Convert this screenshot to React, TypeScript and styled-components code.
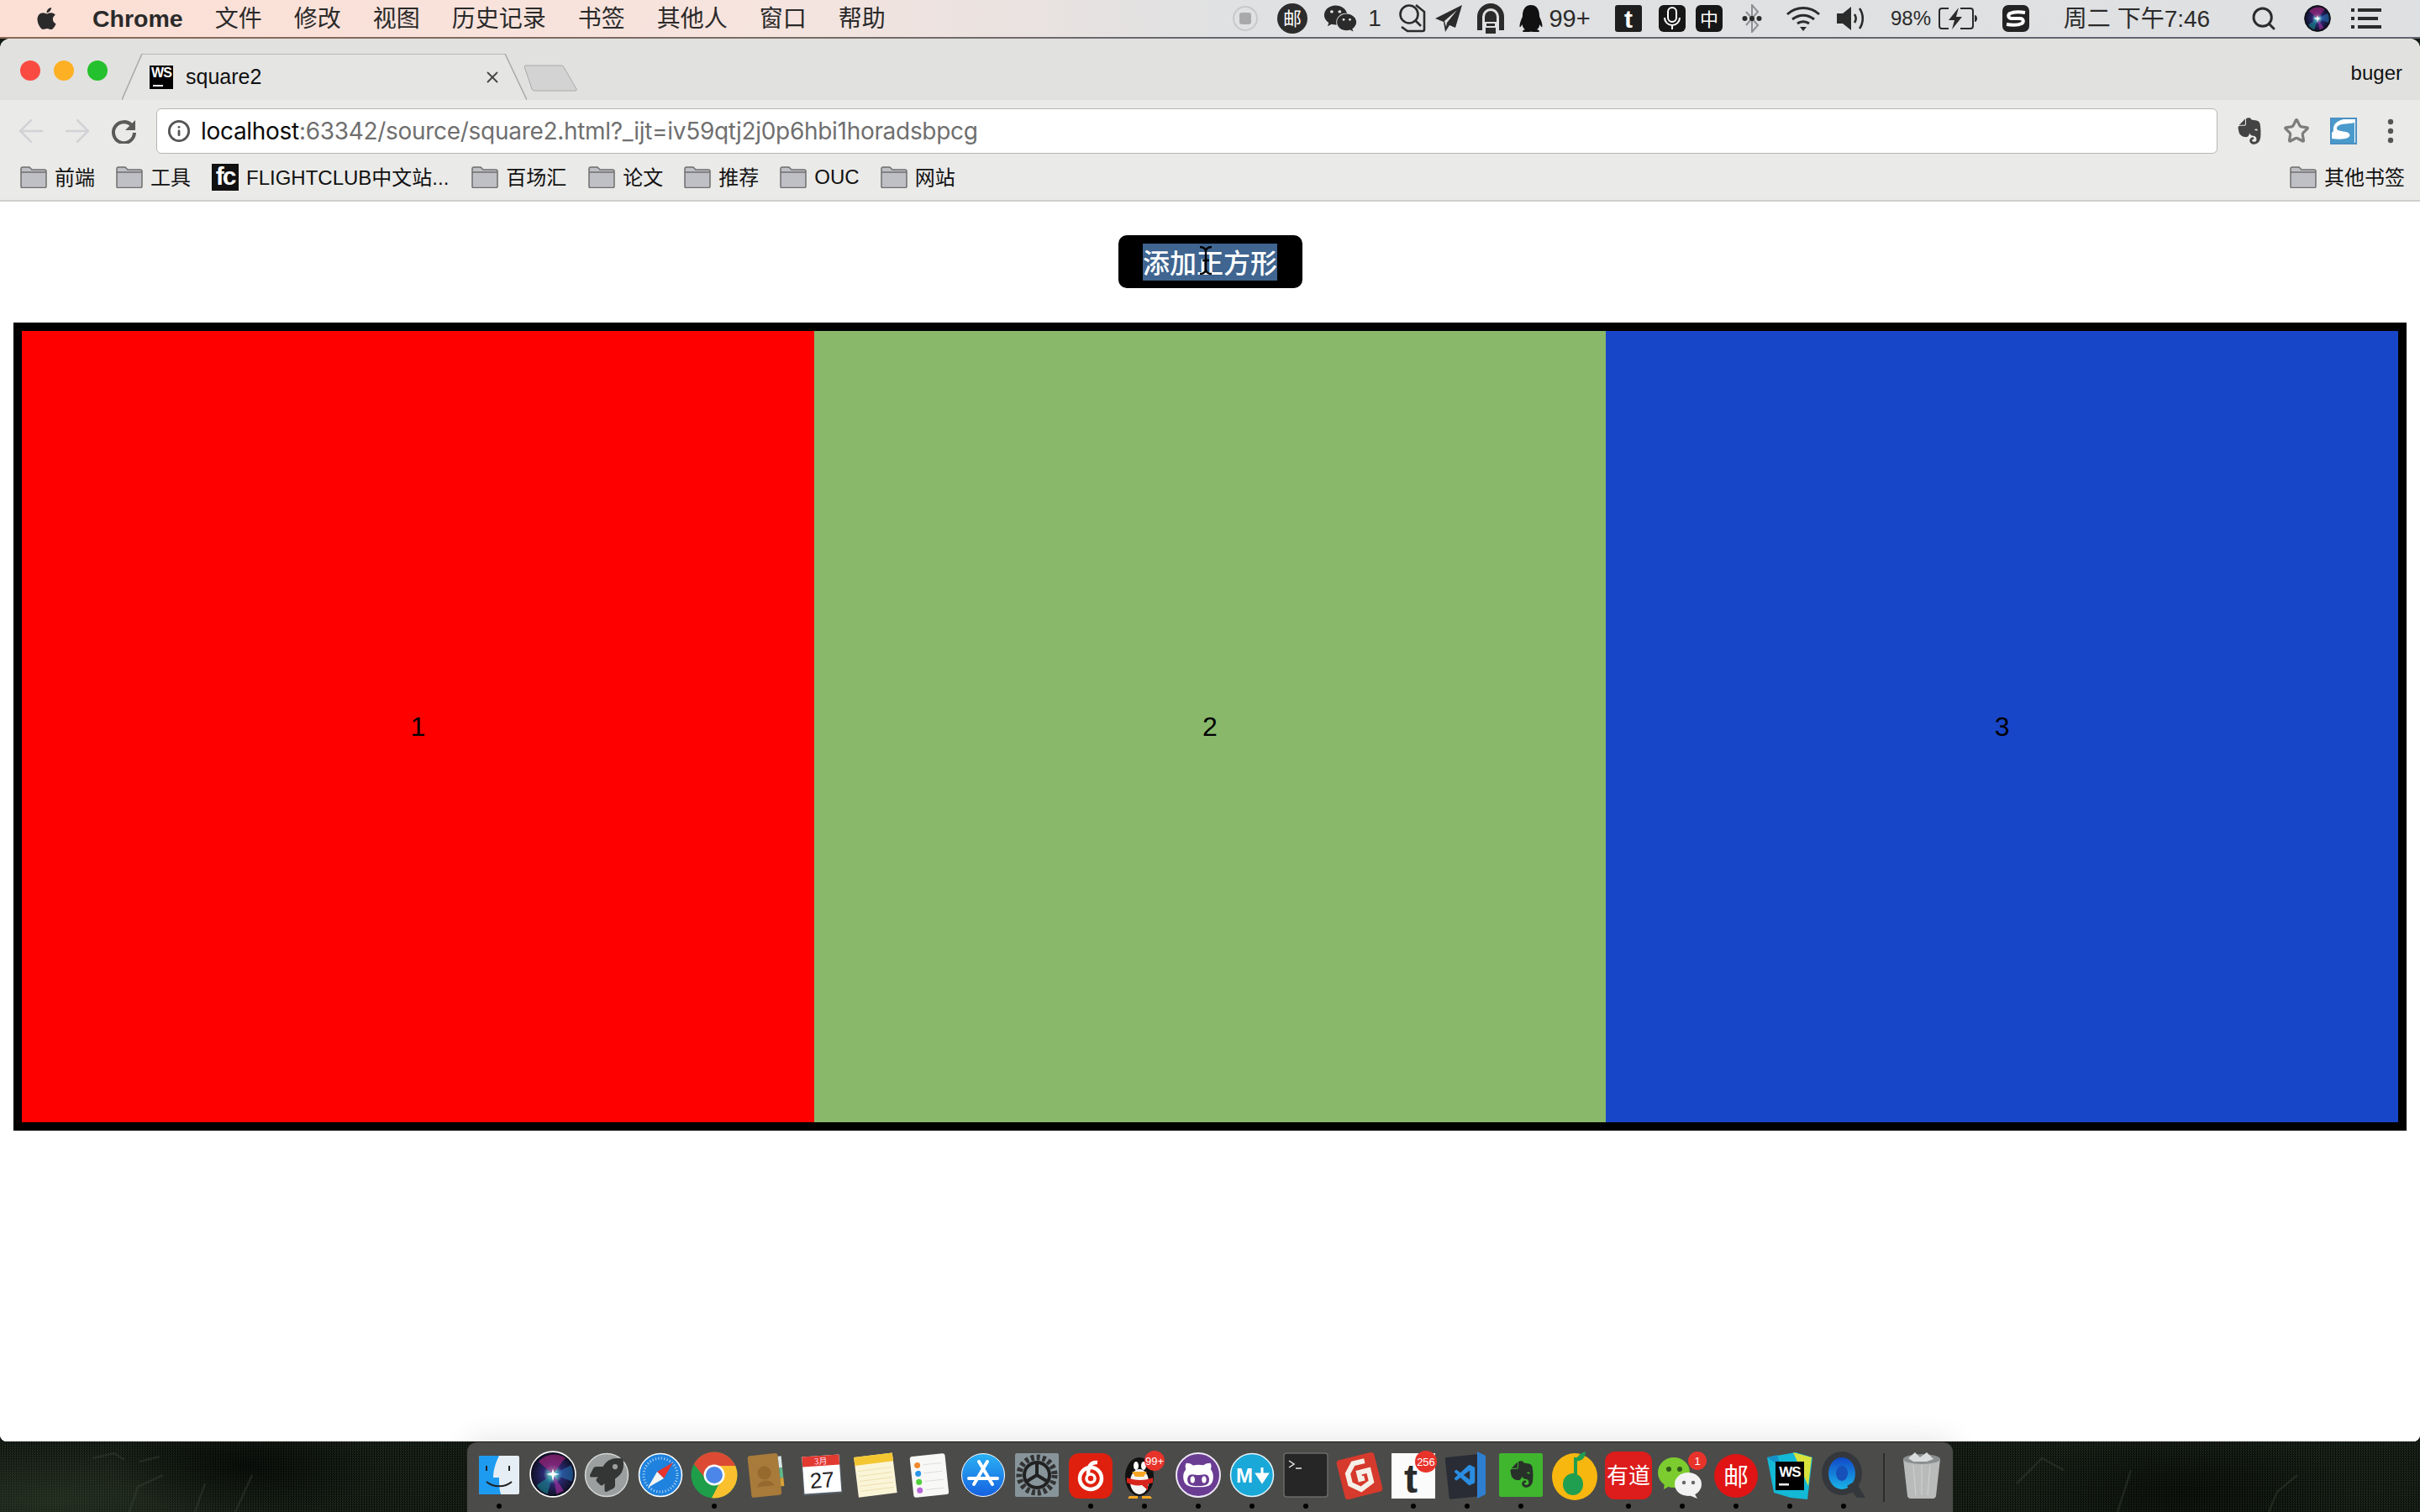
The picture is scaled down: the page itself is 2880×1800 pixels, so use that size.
import React from "react";
import styled, { createGlobalStyle } from "styled-components";
import { FaApple, FaQq, FaWeixin, FaEvernote, FaGithubAlt, FaRocket } from "react-icons/fa";
import { VscVscode } from "react-icons/vsc";
import { Search, Star, ArrowLeft, ArrowRight, Info, X } from "lucide-react";

const UI = `"Liberation Sans", "Noto Sans CJK SC", sans-serif`;

const Global = createGlobalStyle`
  html, body { margin: 0; padding: 0; background: #0c110d; }
  * { box-sizing: border-box; }
`;

const Screen = styled.div`
  width: 2880px; height: 1800px; overflow: hidden; display: flex; flex-direction: column;
  background: #121812; font-family: ${UI}; position: relative;
`;

/* ---------- macOS menu bar ---------- */
const MenuBar = styled.header`
  height: 44px; flex: none; display: flex; align-items: center; padding-left: 42px; color: #2a2a2a;
  background: linear-gradient(90deg, #fcdfd5 0, #f6e4de 900px, #e0e1e2 1450px, #dfe0e2 100%);
  font-size: 28px;
`;
const MenuLeft = styled.nav`display: flex; align-items: center; gap: 38px;`;
const MenuEntry = styled.span`margin-top: -4px;`;
const Apple = styled.span`display: flex; width: 27px; margin-right: 3px; color: #2a2a2a;`;
const AppName = styled.b`font-size: 28.5px; font-weight: 700;`;
const Status = styled.div`margin-left: auto; display: flex; align-items: center; height: 44px; padding-right: 46px;`;
const StatusItem = styled.span<{ $w: number; $ml: number; $fs?: number }>`
  display: flex; align-items: center; justify-content: center; flex: none;
  width: ${(p) => p.$w}px; margin-left: ${(p) => p.$ml}px; color: #2b2b2b; font-size: ${(p) => p.$fs || 26}px; white-space: nowrap;
`;
const Clock = styled(StatusItem)`margin-top: -4px;`;
const Rule = styled.div<{ $c: string }>`height: 2px; flex: none; background: ${(p) => p.$c};`;

/* ---------- browser window ---------- */
const BrowserWindow = styled.main`
  height: 1670px; flex: none; display: flex; flex-direction: column; background: #fff;
  border-radius: 12px 12px 8px 8px; overflow: hidden;
`;
const TabStrip = styled.div`
  height: 73px; flex: none; display: flex; align-items: flex-end; background: #e1e1df; position: relative;
`;
const Lights = styled.div`display: flex; gap: 16px; padding: 0 0 23px 24px; width: 145px; flex: none;`;
const Light = styled.i<{ $c: string }>`width: 24px; height: 24px; border-radius: 50%; background: ${(p) => p.$c};`;
const Tab = styled.div`
  width: 482px; height: 55px; flex: none; position: relative; display: flex; align-items: center; padding: 0 0 0 33px;
  font-size: 25px; color: #111;
`;
const TabShape = styled.svg`position: absolute; inset: 0;`;
const Favicon = styled.span`
  position: relative; width: 28px; height: 28px; background: #000; color: #fff; font-size: 16px; font-weight: 700;
  letter-spacing: -1px; line-height: 17px; text-align: center; flex: none; margin-right: 15px;
  &::after { content: ""; position: absolute; left: 4px; bottom: 3px; width: 12px; height: 2px; background: #fff; }
`;
const TabTitle = styled.span`position: relative; flex: 1;`;
const TabClose = styled.span`position: relative; display: flex; margin-right: 30px; color: #444;`;
const NewTab = styled.svg`flex: none; margin: 0 0 10px -5px;`;
const Account = styled.span`position: absolute; right: 21px; top: 27px; font-size: 24px; color: #111;`;

const Toolbar = styled.div`
  height: 71px; flex: none; display: flex; align-items: flex-start; padding-top: 10px; background: #eaeae8;
`;
const NavButtons = styled.div`display: flex; width: 186px; height: 54px; align-items: center; padding-left: 15px; gap: 11px; flex: none;`;
const NavIcon = styled.span<{ $c: string }>`display: flex; color: ${(p) => p.$c};`;
const ReloadIcon = styled.svg`flex: none; margin-left: 8px;`;
const Omnibox = styled.div`
  width: 2453px; height: 54px; flex: none; display: flex; align-items: center; gap: 12px; padding-left: 12px;
  background: #fff; border: 1px solid #b6b6b6; border-radius: 6px; font: 28px Inter, "Liberation Sans", sans-serif;
  letter-spacing: -0.3px; color: #6f6f6f; white-space: nowrap;
`;
const Host = styled.span`color: #0a0a0a;`;
const Extensions = styled.div`display: flex; height: 54px; align-items: center; flex: none;`;
const Ext = styled.span<{ $w: number; $ml: number; $c?: string }>`
  display: flex; justify-content: center; width: ${(p) => p.$w}px; margin-left: ${(p) => p.$ml}px; color: ${(p) => p.$c || "#444"};
`;

const Bookmarks = styled.div`
  height: 50px; flex: none; display: flex; align-items: flex-start; padding: 5px 18px 0 24px; gap: 25px;
  background: #eaeae8; border-bottom: 2px solid #cfcfcb; font-size: 24px; color: #111;
`;
const Bookmark = styled.span<{ $right?: boolean; $extra?: number }>`
  display: flex; align-items: center; gap: 9px; height: 32px; white-space: nowrap; flex: none;
  margin-right: ${(p) => p.$extra || 0}px;
  ${(p) => (p.$right ? "margin-left: auto;" : "")}
`;
const Label = styled.span<{ $latin?: boolean }>`
  margin-top: ${(p) => (p.$latin ? 0 : -4)}px;
`;
const FcIcon = styled.span`
  width: 32px; height: 32px; background: #111; color: #fff; font-size: 30px; font-weight: 700; line-height: 30px;
  text-align: center; letter-spacing: -2px; font-family: "Liberation Sans", sans-serif;
`;

/* ---------- page content ---------- */
const Page = styled.section`
  flex: 1; display: flex; flex-direction: column; align-items: center; padding: 40px 16px 0; background: #fff;
`;
const AddButton = styled.button`
  width: 219px; height: 63px; flex: none; background: #000; border: 0; border-radius: 10px; padding: 0; color: #fff;
  font: 500 32px "Noto Sans CJK SC", "Liberation Sans", sans-serif; position: relative; display: flex;
  align-items: center; justify-content: center;
`;
const Selected = styled.span`display: block; height: 44px; line-height: 42px; background: #3f6590; width: 160px;`;
const Caret = styled.svg`position: absolute; left: 96px; top: 13px;`;
const Board = styled.div`
  width: 2848px; height: 962px; margin-top: 41px; flex: none; display: grid; grid-template-columns: repeat(3, 1fr);
  border: 10px solid #000;
`;
const Square = styled.div<{ $c: string }>`
  background: ${(p) => p.$c}; display: flex; align-items: center; justify-content: center; font-size: 32px; color: #000;
`;

/* ---------- desktop and dock ---------- */
const Desktop = styled.footer`
  flex: 1; display: flex; justify-content: center; align-items: flex-start; position: relative;
  background:
    radial-gradient(ellipse 160px 60px at 290px 30px, rgba(0, 0, 0, 0.55), transparent),
    radial-gradient(ellipse 200px 70px at 2600px 60px, rgba(0, 0, 0, 0.45), transparent),
    radial-gradient(ellipse 300px 70px at 60px 70px, rgba(50, 66, 44, 0.5), transparent),
    repeating-conic-gradient(#0c100c 0 25%, #1f291e 0 50%) 0 0 / 3px 3px;
`;
const Branches = styled.svg`position: absolute; inset: 0;`;
const Dock = styled.div`
  width: 1768px; height: 84px; flex: none; display: flex; padding-left: 6px; position: relative;
  background: #4b4b49; border-top: 1px solid #1a1a1a; border-radius: 12px 12px 0 0;
  box-shadow: 0 0 36px rgba(0, 0, 0, 0.12);
`;
const Slot = styled.div`width: 64px; height: 84px; flex: none; position: relative; display: flex; justify-content: center; padding-top: 10px;`;
const RunDot = styled.i`position: absolute; left: 29px; top: 73px; width: 6px; height: 6px; border-radius: 50%; background: #000;`;
const DockDivider = styled.i`width: 2px; height: 58px; margin: 13px 12px 0 15px; background: #2c2c2c; flex: none;`;

/* ---------- menu-bar drawings ---------- */
const RecordIcon = () => (
  <svg width="30" height="30" viewBox="0 0 30 30"><circle cx="15" cy="15" r="14" fill="none" stroke="#c8c8cc" strokeWidth="2" /><rect x="8" y="8" width="14" height="14" rx="3" fill="#a9a9ac" /></svg>
);
const MailBadge = () => (
  <svg width="36" height="36" viewBox="0 0 36 36"><circle cx="18" cy="18" r="18" fill="#2c2c2c" /><text x="18" y="26" fontSize="22" fill="#fff" textAnchor="middle" fontFamily="Noto Sans CJK SC">邮</text></svg>
);
const ScanIcon = () => (
  <svg width="34" height="34" viewBox="0 0 34 34" fill="none" stroke="#2b2b2b" strokeWidth="2.6"><path d="M21 1l10 8v21a2 2 0 0 1-2 2H11l-7-5" /><circle cx="13" cy="12" r="10.5" /><path d="M20 19l7 7" /></svg>
);
const PlaneIcon = () => (
  <svg width="32" height="32" viewBox="0 0 32 32" fill="#2b2b2b"><path d="M32 0L0 16l10 4 2 12 5-8 7 3zM11 19L26 6 14 21l-1 5z" fillRule="evenodd" /></svg>
);
const ArchIcon = () => (
  <svg width="32" height="36" viewBox="0 0 32 36" fill="#2b2b2b"><path d="M0 32V16a16 16 0 0 1 32 0v16h-6V16a10 10 0 0 0-20 0v16z" /><path d="M9 22v-6a7 7 0 0 1 14 0v6z" /><rect x="11" y="24" width="10" height="3" /><rect x="10" y="29" width="12" height="7" /></svg>
);
const TileT = () => (
  <svg width="32" height="32" viewBox="0 0 32 32"><rect width="32" height="32" rx="3" fill="#1e1e1e" /><text x="16" y="27" fontSize="30" fontWeight="700" fill="#fff" textAnchor="middle" fontFamily="Liberation Sans">t</text></svg>
);
const MicIcon = () => (
  <svg width="32" height="32" viewBox="0 0 32 32" fill="none"><rect width="32" height="32" rx="6" fill="#161616" /><rect x="11" y="3" width="10" height="17" rx="5" stroke="#fff" strokeWidth="2" /><path d="M7 15a9 9 0 0 0 18 0M16 24v5" stroke="#fff" strokeWidth="2" /></svg>
);
const ZhongIcon = () => (
  <svg width="32" height="32" viewBox="0 0 32 32"><rect width="32" height="32" rx="6" fill="#161616" /><text x="16" y="25" fontSize="22" fill="#fff" textAnchor="middle" fontFamily="Noto Sans CJK SC">中</text></svg>
);
const BluetoothIcon = () => (
  <svg width="24" height="34" viewBox="0 0 24 34" fill="none"><path d="M5 9l14 16-7 8V1l7 8L5 25" stroke="#8e8e96" strokeWidth="2" /><circle cx="3.5" cy="17" r="3" fill="#2b2b2b" /><circle cx="12" cy="17" r="3" fill="#2b2b2b" /><circle cx="20.5" cy="17" r="3" fill="#2b2b2b" /></svg>
);
const WifiIcon = () => (
  <svg width="42" height="30" viewBox="0 0 42 30" fill="none" stroke="#2b2b2b" strokeWidth="3"><path d="M2 10c11-10 27-10 38 0M8 16c8-6.5 18-6.5 26 0M14 21c4-3 10-3 14 0" /><path d="M17 25h8l-4 5z" fill="#2b2b2b" stroke="none" /></svg>
);
const SpeakerIcon = () => (
  <svg width="34" height="30" viewBox="0 0 34 30" fill="none"><path d="M0 9h7l10-8v28L7 21H0z" fill="#2b2b2b" /><path d="M21 10c2 3 2 7 0 10M27 3c5 7 5 17 0 24" stroke="#2b2b2b" strokeWidth="2.6" /></svg>
);
const BatteryIcon = () => (
  <svg width="46" height="26" viewBox="0 0 46 26" fill="none"><path d="M12 1H4a3 3 0 0 0-3 3v18a3 3 0 0 0 3 3h8M26 1h12a3 3 0 0 1 3 3v18a3 3 0 0 1-3 3H26" stroke="#2b2b2b" strokeWidth="2" /><path d="M24 0L12 15h7l-3 11 12-15h-7z" fill="#2b2b2b" /><path d="M43 9c2 0 3 2 3 4s-1 4-3 4z" fill="#2b2b2b" /></svg>
);
const SogouIcon = () => (
  <svg width="32" height="32" viewBox="0 0 32 32" fill="none"><rect width="32" height="32" rx="7" fill="#222" /><path d="M27 9c-6-1-14-1-18 1-3 2-2 6 2 6h10c4 0 5 4 2 6-4 2-12 2-18 1" stroke="#fff" strokeWidth="4" /></svg>
);
const SiriGlyph = ({ size }: { size: number }) => (
  <svg width={size} height={size} viewBox="0 0 52 52">
    <defs>
      <radialGradient id={`siri${size}`} cx="50%" cy="50%" r="55%">
        <stop offset="0" stopColor="#d8ffff" /><stop offset="0.14" stopColor="#6fc8cc" /><stop offset="0.42" stopColor="#2a2870" /><stop offset="1" stopColor="#0c0e1e" />
      </radialGradient>
    </defs>
    <circle cx="26" cy="26" r="25" fill="#0f1020" stroke={size > 40 ? "#fff" : "#111"} strokeWidth="1.5" />
    <circle cx="26" cy="26" r="23" fill={`url(#siri${size})`} />
    <path d="M26 26L10 12A23 23 0 0 1 40 8z" fill="#b0257f" opacity=".6" />
    <path d="M26 26L46 16A23 23 0 0 1 47 34z" fill="#2580c8" opacity=".5" />
    <path d="M26 26L8 38A23 23 0 0 0 20 48z" fill="#18a0a0" opacity=".5" />
    <path d="M26 26L38 44l-8 4z" fill="#b030a8" opacity=".6" />
    <path d="M26 20l1.500 4.500 6 1.500-6 1.500-1.500 6-1.500-6-6-1.500 6-1.500z" fill="#fff" />
  </svg>
);
const ListIcon = () => (
  <svg width="36" height="28" viewBox="0 0 36 28" fill="#2b2b2b"><rect y="2" width="4" height="4" /><rect x="8" y="2" width="28" height="4" /><rect y="12" width="4" height="4" /><rect x="8" y="12" width="24" height="4" /><rect y="22" width="4" height="4" /><rect x="8" y="22" width="28" height="4" /></svg>
);

/* ---------- browser drawings ---------- */
const FolderIcon = () => (
  <svg width="32" height="26" viewBox="0 0 32 26">
    <path d="M1 24V3a2 2 0 0 1 2-2h8l3 3h15a2 2 0 0 1 2 2v18a1.5 1.5 0 0 1-1.500 1.500h-27A1.5 1.5 0 0 1 1 24z" fill="#bfbfc6" stroke="#6e6e6e" strokeWidth="1.5" />
    <path d="M1 7h30" stroke="#6e6e6e" strokeWidth="1.5" />
  </svg>
);
const SogouExt = () => (
  <svg width="32" height="32" viewBox="0 0 32 32"><rect x="1" y="1" width="30" height="30" fill="#fff" stroke="#4a90c4" strokeWidth="2" /><path d="M29 6c-7 2-19 0-21 6-1 4 6 4 11 5 5 1 6 5 2 7-4 2-11 2-19 1l-1 5h28V6z" fill="#4a9acb" /><path d="M2 2h14C8 4 3 8 4 16L2 18z" fill="#4a9acb" /></svg>
);
const DotsIcon = () => (
  <svg width="8" height="30" viewBox="0 0 8 30" fill="#555"><circle cx="4" cy="4" r="3.2" /><circle cx="4" cy="15" r="3.2" /><circle cx="4" cy="26" r="3.2" /></svg>
);

/* ---------- dock drawings ---------- */
const Dk = ({ children }: { children: React.ReactNode }) => (
  <svg width="60" height="60" viewBox="0 0 60 60">{children}</svg>
);
const Finder = () => (
  <Dk>
    <rect x="6" y="6" width="48" height="46" rx="2" fill="#e6eef5" />
    <path d="M8 6h22c-4 8-7 17-7 26h7c0 7 0 14 2 20H8a2 2 0 0 1-2-2V8a2 2 0 0 1 2-2z" fill="#1d9bf0" />
    <path d="M15 18v6M42 18v6" stroke="#222" strokeWidth="2" />
    <path d="M15 37c8 7 22 7 30 0" fill="none" stroke="#222" strokeWidth="2" />
  </Dk>
);
const Launchpad = () => (
  <Dk>
    <circle cx="30" cy="29" r="25.5" fill="#9b9f9f" stroke="#d4d6d4" strokeWidth="1.5" />
    <foreignObject x="10" y="9" width="40" height="40"><FaRocket size={40} color="#343635" /></foreignObject>
  </Dk>
);
const Safari = () => (
  <Dk>
    <circle cx="30" cy="29" r="25.5" fill="#1f82de" stroke="#fff" strokeWidth="1.5" />
    <circle cx="30" cy="29" r="20" fill="none" stroke="#bcdcf5" strokeWidth="3" strokeDasharray="1 2.5" />
    <path d="M45 14L26 25l8 8z" fill="#e8342c" />
    <path d="M15 44l19-11-8-8z" fill="#f4f4f4" />
  </Dk>
);
const Chrome = () => (
  <Dk>
    <clipPath id="chromeClip"><circle cx="30" cy="29" r="27.5" /></clipPath>
    <g clipPath="url(#chromeClip)">
      <rect width="60" height="60" fill="#1f9e4a" />
      <path d="M30 18H62V-4H-4V4L5 15 21 35z" fill="#dd4a34" />
      <path d="M30 18H62V62H24L38 35z" fill="#fbc02d" />
    </g>
    <circle cx="30" cy="29" r="12.5" fill="#fff" />
    <circle cx="30" cy="29" r="10" fill="#4b86e8" />
  </Dk>
);
const Contacts = () => (
  <Dk>
    <g transform="rotate(-6 30 30)">
      <rect x="8" y="4" width="36" height="50" rx="3" fill="#a87b3b" />
      <rect x="44" y="8" width="4" height="14" fill="#d8e6e6" /><rect x="44" y="22" width="4" height="12" fill="#5fb88a" /><rect x="44" y="34" width="4" height="10" fill="#d8a23a" />
      <circle cx="26" cy="26" r="8" fill="#96692e" /><path d="M16 42c2-9 18-9 20 0z" fill="#96692e" />
    </g>
  </Dk>
);
const Calendar = () => (
  <Dk>
    <g transform="rotate(-4 30 30)">
      <rect x="7" y="6" width="46" height="46" fill="#57616b" />
      <rect x="8" y="6" width="44" height="44" fill="#fff" />
      <rect x="8" y="6" width="44" height="12" fill="#e23a30" />
      <text x="30" y="16" fontSize="10" fill="#fde" textAnchor="middle" fontFamily="Noto Sans CJK SC">3月</text>
      <text x="30" y="44" fontSize="26" fill="#222" textAnchor="middle" fontFamily="Liberation Sans">27</text>
    </g>
  </Dk>
);
const Notes = () => (
  <Dk>
    <g transform="rotate(-7 30 30)">
      <rect x="7" y="5" width="46" height="48" fill="#fbf5d8" />
      <rect x="7" y="5" width="46" height="10" fill="#f4c732" />
      <path d="M10 22h40M10 28h40M10 34h40M10 40h40M10 46h40" stroke="#ecdfae" strokeWidth="1" />
    </g>
  </Dk>
);
const Reminders = () => (
  <Dk>
    <g transform="rotate(-6 30 30)">
      <rect x="9" y="5" width="42" height="49" rx="3" fill="#f8f8f6" />
      <circle cx="17" cy="16" r="3.5" fill="#f0892c" /><circle cx="17" cy="26" r="3.5" fill="#2b96e8" /><circle cx="17" cy="36" r="3.5" fill="#4fcf3c" /><circle cx="17" cy="46" r="3.5" fill="#b865d8" />
      <path d="M24 16h22M24 26h22M24 36h22M24 46h22" stroke="#ddd" />
    </g>
  </Dk>
);
const AppStore = () => (
  <Dk>
    <defs><linearGradient id="appS" x1="0" y1="0" x2="0" y2="1"><stop offset="0" stopColor="#2ab2f5" /><stop offset="1" stopColor="#1560e0" /></linearGradient></defs>
    <circle cx="30" cy="29" r="25.5" fill="url(#appS)" stroke="#fff" strokeWidth="1" />
    <path d="M25 13l16 27M35 13L19 40M13 33h34" stroke="#fff" strokeWidth="4" strokeLinecap="round" />
  </Dk>
);
const SysPrefs = () => (
  <Dk>
    <rect x="4" y="3" width="52" height="52" rx="2" fill="#87959b" />
    <circle cx="30" cy="29" r="21" fill="none" stroke="#333" strokeWidth="7" strokeDasharray="4 3" />
    <circle cx="30" cy="29" r="15" fill="none" stroke="#222" strokeWidth="4" />
    <path d="M30 29V14M30 29L17 37M30 29l13 8" stroke="#222" strokeWidth="4" />
  </Dk>
);
const Netease = () => (
  <Dk>
    <rect x="4" y="3" width="52" height="54" rx="12" fill="#e0200f" />
    <circle cx="30" cy="33" r="13" fill="none" stroke="#fff" strokeWidth="4.5" />
    <circle cx="30" cy="33" r="5" fill="none" stroke="#fff" strokeWidth="3.5" />
    <path d="M27 28c0-8 2-15 11-14" fill="none" stroke="#fff" strokeWidth="4.5" />
  </Dk>
);
const Penguin = () => (
  <Dk>
    <ellipse cx="24" cy="31" rx="17" ry="23" fill="#111" />
    <ellipse cx="24" cy="37" rx="11" ry="15" fill="#f4f4f4" />
    <ellipse cx="20" cy="18" rx="3" ry="5" fill="#fff" /><ellipse cx="29" cy="18" rx="3" ry="5" fill="#fff" />
    <path d="M15 25h18l-4 6H19z" fill="#f6a623" />
    <path d="M9 32c10 4 22 4 31 0v6l-6 2v7l-7-6c-6 1-12 0-18-3z" fill="#d8231c" />
    <path d="M12 54h10v3H10zM27 54h10l2 3H27z" fill="#f6a623" />
    <circle cx="42" cy="12" r="12" fill="#e8332b" />
    <text x="42" y="17" fontSize="13" fill="#fff" textAnchor="middle" fontFamily="Liberation Sans">99+</text>
  </Dk>
);
const Github = () => (
  <Dk>
    <circle cx="30" cy="29" r="26" fill="#6a3d93" stroke="#efe8f6" strokeWidth="2" />
    <foreignObject x="11" y="10" width="38" height="38"><FaGithubAlt size={38} color="#fff" /></foreignObject>
  </Dk>
);
const Markdown = () => (
  <Dk>
    <circle cx="30" cy="29" r="25.5" fill="#1aa8d8" stroke="#e6f6fb" strokeWidth="1.5" />
    <text x="21" y="38" fontSize="24" fontWeight="700" fill="#fff" textAnchor="middle" fontFamily="Liberation Sans">M</text>
    <path d="M42 20v12M36 28l6 9 6-9z" stroke="#fff" strokeWidth="3" fill="#fff" />
  </Dk>
);
const Terminal = () => (
  <Dk>
    <rect x="4" y="3" width="52" height="52" rx="3" fill="#262626" stroke="#6b6b6b" strokeWidth="1.5" />
    <path d="M10 12l6 4-6 4" fill="none" stroke="#e8e8e8" strokeWidth="1.5" /><path d="M18 21h7" stroke="#e8e8e8" strokeWidth="1.5" />
  </Dk>
);
const Foxit = () => (
  <Dk>
    <g transform="rotate(-14 30 30)">
      <rect x="7" y="6" width="46" height="48" rx="4" fill="#d63a2c" />
      <path d="M40 14H26l-9 10v13l11 9 14-6V26H30v8h5" fill="none" stroke="#f5f0e8" strokeWidth="6" />
    </g>
  </Dk>
);
const TileDock = () => (
  <Dk>
    <rect x="4" y="3" width="52" height="54" fill="#fbfbfb" />
    <text x="27" y="50" fontSize="48" fontWeight="700" fill="#2a2a2a" textAnchor="middle" fontFamily="Liberation Sans">t</text>
    <circle cx="45" cy="13" r="13" fill="#e8332b" />
    <text x="45" y="18" fontSize="13" fill="#fff" textAnchor="middle" fontFamily="Liberation Sans">256</text>
  </Dk>
);
const VsCode = () => (
  <Dk>
    <rect x="6" y="6" width="40" height="50" rx="2" fill="#2a2c35" transform="rotate(-6 26 30)" />
    <path d="M52 6v46l-10 5V1z" fill="#2e7fd0" />
    <foreignObject x="13" y="15" width="30" height="30"><VscVscode size={30} color="#2a8de0" /></foreignObject>
  </Dk>
);
const Evernote = () => (
  <Dk>
    <rect x="4" y="3" width="52" height="52" rx="2" fill="#3fb62e" />
    <foreignObject x="13" y="10" width="36" height="40"><FaEvernote size={36} color="#28302a" /></foreignObject>
  </Dk>
);
const QQMusic = () => (
  <Dk>
    <ellipse cx="30" cy="31" rx="27" ry="28" fill="#f8b70f" />
    <path d="M31 8v32" stroke="#1f9f4f" strokeWidth="4" />
    <ellipse cx="28" cy="40" rx="12" ry="13" fill="#1f9f4f" />
    <path d="M31 12c2-6 6-9 12-11 0 7-4 12-12 11z" fill="#1f9f4f" />
  </Dk>
);
const Youdao = () => (
  <Dk>
    <rect x="2" y="1" width="56" height="57" rx="12" fill="#dd1c1c" />
    <text x="30" y="39" fontSize="26" fill="#fff" textAnchor="middle" fontFamily="Noto Sans CJK SC">有道</text>
  </Dk>
);
const WeChatDock = () => (
  <Dk>
    <ellipse cx="20" cy="26" rx="19" ry="18" fill="#7ccc2f" />
    <path d="M9 38l-1 8 9-5z" fill="#7ccc2f" />
    <circle cx="14" cy="22" r="3" fill="#2f5c18" /><circle cx="27" cy="22" r="3" fill="#2f5c18" />
    <ellipse cx="37" cy="40" rx="16" ry="14" fill="#f2f2f2" />
    <path d="M44 50l4 7-10-4z" fill="#f2f2f2" />
    <circle cx="32" cy="38" r="2.2" fill="#666" /><circle cx="43" cy="38" r="2.2" fill="#666" />
    <circle cx="48" cy="12" r="11" fill="#e8332b" />
    <text x="48" y="17" fontSize="13" fill="#fff" textAnchor="middle" fontFamily="Liberation Sans">1</text>
  </Dk>
);
const Mail163 = () => (
  <Dk>
    <circle cx="30" cy="30" r="26" fill="#e01414" />
    <text x="30" y="41" fontSize="30" fill="#fff" textAnchor="middle" fontFamily="Noto Sans CJK SC">邮</text>
  </Dk>
);
const WebStorm = () => (
  <Dk>
    <path d="M3 8l34-6 20 6-6 50-20-2-20-6z" fill="#13b9d6" />
    <path d="M34 2l22 6-4 34z" fill="#d9e23a" />
    <path d="M3 8l12-3 4 14z" fill="#1591c9" />
    <rect x="13" y="13" width="34" height="34" fill="#000" />
    <text x="30" y="31" fontSize="17" fontWeight="700" fill="#fff" textAnchor="middle" letterSpacing="-1" fontFamily="Liberation Sans">WS</text>
    <rect x="17" y="39" width="12" height="2.5" fill="#fff" />
  </Dk>
);
const QuickTime = () => (
  <Dk>
    <defs><linearGradient id="qtG" x1="0" y1="0" x2="0" y2="1"><stop offset="0" stopColor="#1248c8" /><stop offset="1" stopColor="#18b4e8" /></linearGradient></defs>
    <ellipse cx="28" cy="27" rx="24" ry="26" fill="#34383c" />
    <ellipse cx="28" cy="27" rx="16" ry="19" fill="url(#qtG)" />
    <ellipse cx="28" cy="27" rx="7" ry="9" fill="#1650b8" />
    <path d="M34 42l10-6 12 20h-10z" fill="#34383c" />
  </Dk>
);
const Trash = () => (
  <Dk>
    <path d="M8 10h44l-5 44a4 4 0 0 1-4 3H17a4 4 0 0 1-4-3z" fill="#b9bbbb" />
    <ellipse cx="30" cy="10" rx="22" ry="6" fill="#8c8f90" />
    <path d="M14 9l8-7 6 6 8-6 8 8-8 3H20z" fill="#d8dcdc" />
    <path d="M20 17l3 36M30 17v36M40 17l-3 36" stroke="#cfd2d2" strokeWidth="1" />
  </Dk>
);

const menu = ["文件", "修改", "视图", "历史记录", "书签", "其他人", "窗口", "帮助"];
const folders = ["前端", "工具"];
const dockApps: { key: string; C: React.FC; on?: boolean }[] = [
  { key: "finder", C: Finder, on: true },
  { key: "siri", C: () => <SiriGlyph size={56} /> },
  { key: "launch", C: Launchpad },
  { key: "safari", C: Safari },
  { key: "chrome", C: Chrome, on: true },
  { key: "contacts", C: Contacts },
  { key: "calendar", C: Calendar },
  { key: "notes", C: Notes },
  { key: "reminders", C: Reminders },
  { key: "appstore", C: AppStore },
  { key: "prefs", C: SysPrefs },
  { key: "netease", C: Netease, on: true },
  { key: "qq", C: Penguin, on: true },
  { key: "github", C: Github, on: true },
  { key: "md", C: Markdown, on: true },
  { key: "term", C: Terminal, on: true },
  { key: "foxit", C: Foxit },
  { key: "tile", C: TileDock, on: true },
  { key: "vscode", C: VsCode, on: true },
  { key: "evernote", C: Evernote, on: true },
  { key: "qqmusic", C: QQMusic },
  { key: "youdao", C: Youdao, on: true },
  { key: "wechat", C: WeChatDock, on: true },
  { key: "mail", C: Mail163, on: true },
  { key: "ws", C: WebStorm, on: true },
  { key: "qt", C: QuickTime, on: true },
];

export default function App() {
  return (
    <Screen>
      <Global />
      <MenuBar>
        <MenuLeft>
          <Apple><FaApple size={30} /></Apple>
          <AppName>Chrome</AppName>
          {menu.map((m) => <MenuEntry key={m}>{m}</MenuEntry>)}
        </MenuLeft>
        <Status>
          <StatusItem $w={30} $ml={0}><RecordIcon /></StatusItem>
          <StatusItem $w={36} $ml={23}><MailBadge /></StatusItem>
          <StatusItem $w={40} $ml={19}><FaWeixin size={40} /></StatusItem>
          <StatusItem $w={12} $ml={15} $fs={28}>1</StatusItem>
          <StatusItem $w={34} $ml={22}><ScanIcon /></StatusItem>
          <StatusItem $w={32} $ml={10}><PlaneIcon /></StatusItem>
          <StatusItem $w={32} $ml={18}><ArchIcon /></StatusItem>
          <StatusItem $w={28} $ml={18}><FaQq size={34} color="#111" /></StatusItem>
          <StatusItem $w={50} $ml={7} $fs={29}>99+</StatusItem>
          <StatusItem $w={32} $ml={29}><TileT /></StatusItem>
          <StatusItem $w={32} $ml={20}><MicIcon /></StatusItem>
          <StatusItem $w={32} $ml={12}><ZhongIcon /></StatusItem>
          <StatusItem $w={24} $ml={23}><BluetoothIcon /></StatusItem>
          <StatusItem $w={42} $ml={28}><WifiIcon /></StatusItem>
          <StatusItem $w={34} $ml={19}><SpeakerIcon /></StatusItem>
          <StatusItem $w={48} $ml={30} $fs={24}>98%</StatusItem>
          <StatusItem $w={46} $ml={9}><BatteryIcon /></StatusItem>
          <StatusItem $w={32} $ml={30}><SogouIcon /></StatusItem>
          <Clock $w={180} $ml={38} $fs={28}>周二 下午7:46</Clock>
          <StatusItem $w={32} $ml={45}><Search size={38} strokeWidth={2.2} /></StatusItem>
          <StatusItem $w={32} $ml={32}><SiriGlyph size={32} /></StatusItem>
          <StatusItem $w={36} $ml={24}><ListIcon /></StatusItem>
        </Status>
      </MenuBar>
      <Rule $c="linear-gradient(90deg, #8a6a55 0, #7a6c66 900px, #666870 1450px, #62646e 100%)" />
      <BrowserWindow>
        <TabStrip>
          <Lights>
            <Light $c="#fa4b43" />
            <Light $c="#fdb023" />
            <Light $c="#25c02d" />
          </Lights>
          <Tab>
            <TabShape width="482" height="55" viewBox="0 0 482 55">
              <path d="M0 55L24 0H456L482 55" fill="#e5e5e3" stroke="#a9a9a9" strokeWidth="1.5" />
            </TabShape>
            <Favicon>WS</Favicon>
            <TabTitle>square2</TabTitle>
            <TabClose><X size={22} strokeWidth={2} /></TabClose>
          </Tab>
          <NewTab width="66" height="32" viewBox="0 0 66 32">
            <path d="M2 2a2 2 0 0 1 2-1h42a3 3 0 0 1 3 2l15 26a1.5 1.5 0 0 1-1 2H14a3 3 0 0 1-3-2z" fill="#d3d3d3" stroke="#a8a8a8" />
          </NewTab>
          <Account>buger</Account>
        </TabStrip>
        <Toolbar>
          <NavButtons>
            <NavIcon $c="#d2d2d6"><ArrowLeft size={44} strokeWidth={1.4} /></NavIcon>
            <NavIcon $c="#d2d2d6"><ArrowRight size={44} strokeWidth={1.4} /></NavIcon>
            <ReloadIcon width="30" height="30" viewBox="0 0 30 30" fill="none">
              <path d="M24 8.5A12.5 12.5 0 1 0 27 17" stroke="#5a5a5a" strokeWidth="4" />
              <path d="M28 2v12H16z" fill="#5a5a5a" />
            </ReloadIcon>
          </NavButtons>
          <Omnibox>
            <NavIcon $c="#555"><Info size={28} strokeWidth={2.4} /></NavIcon>
            <span><Host>localhost</Host>:63342/source/square2.html?_ijt=iv59qtj2j0p6hbi1horadsbpcg</span>
          </Omnibox>
          <Extensions>
            <Ext $w={36} $ml={20} $c="#444"><FaEvernote size={36} /></Ext>
            <Ext $w={34} $ml={21} $c="#7d7d7d"><Star size={32} strokeWidth={2.4} /></Ext>
            <Ext $w={32} $ml={23}><SogouExt /></Ext>
            <Ext $w={8} $ml={36}><DotsIcon /></Ext>
          </Extensions>
        </Toolbar>
        <Bookmarks>
          {folders.map((f) => <Bookmark key={f}><FolderIcon /><Label>{f}</Label></Bookmark>)}
          <Bookmark $extra={2}><FcIcon>fc</FcIcon><Label>FLIGHTCLUB中文站...</Label></Bookmark>
          <Bookmark $extra={1}><FolderIcon /><Label>百场汇</Label></Bookmark>
          <Bookmark><FolderIcon /><Label>论文</Label></Bookmark>
          <Bookmark><FolderIcon /><Label>推荐</Label></Bookmark>
          <Bookmark><FolderIcon /><Label $latin>OUC</Label></Bookmark>
          <Bookmark><FolderIcon /><Label>网站</Label></Bookmark>
          <Bookmark $right><FolderIcon /><Label>其他书签</Label></Bookmark>
        </Bookmarks>
        <Page>
          <AddButton>
            <Selected>添加正方形</Selected>
            <Caret width="16" height="34" viewBox="0 0 16 34" fill="none">
              <path d="M1 1c4 0 6 2 7 4 1-2 3-4 7-4M8 5v24M1 33c4 0 6-2 7-4 1 2 3 4 7 4M4 17h8" stroke="#000" strokeWidth="2.4" />
            </Caret>
          </AddButton>
          <Board>
            <Square $c="#ff0000">1</Square>
            <Square $c="#89b86b">2</Square>
            <Square $c="#1846c8">3</Square>
          </Board>
        </Page>
      </BrowserWindow>
      <Desktop>
        <Branches width="2880" height="84" viewBox="0 0 2880 84" fill="none" stroke="#3a4436" strokeWidth="2.5" opacity="0.4">
          <path d="M110 20l26-6 12 8M166 24l24-6M154 84l10-30 30-14M232 84l12-34M300 40l-20 44M2400 50l30-30 26 14M2520 84l16-50M2700 84l10-24 24-20" />
        </Branches>
        <Dock>
          {dockApps.map(({ key, C, on }) => (
            <Slot key={key}><C />{on && <RunDot />}</Slot>
          ))}
          <DockDivider />
          <Slot><Trash /></Slot>
        </Dock>
      </Desktop>
    </Screen>
  );
}
